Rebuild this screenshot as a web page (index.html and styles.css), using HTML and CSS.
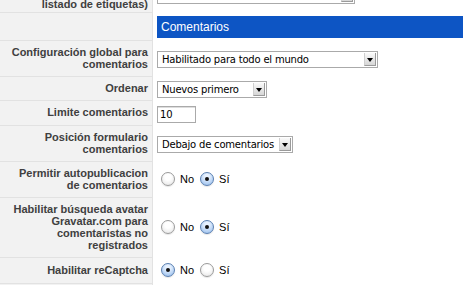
FILE: index.html
```html
<!DOCTYPE html>
<html>
<head>
<meta charset="utf-8">
<link rel="stylesheet" href="styles.css">
</head>
<body>
<table class="form">
  <tr>
    <td class="lbl first">Mostrar etiquetas (en el<br>listado de etiquetas)</td>
    <td class="val"><span class="select" style="width:196px"><span class="txt">Sí</span><span class="arrow"></span></span></td>
  </tr>
  <tr>
    <td class="lbl"></td>
    <td class="val"><div class="bar">Comentarios</div></td>
  </tr>
  <tr>
    <td class="lbl">Configuración global para<br>comentarios</td>
    <td class="val"><span class="select" style="width:219px"><span class="txt">Habilitado para todo el mundo</span><span class="arrow"></span></span></td>
  </tr>
  <tr>
    <td class="lbl">Ordenar</td>
    <td class="val"><span class="select" style="width:108px"><span class="txt">Nuevos primero</span><span class="arrow"></span></span></td>
  </tr>
  <tr>
    <td class="lbl">Limite comentarios</td>
    <td class="val"><span class="input">10</span></td>
  </tr>
  <tr>
    <td class="lbl">Posición formulario<br>comentarios</td>
    <td class="val"><span class="select" style="width:134px"><span class="txt">Debajo de comentarios</span><span class="arrow"></span></span></td>
  </tr>
  <tr>
    <td class="lbl">Permitir autopublicacion<br>de comentarios</td>
    <td class="val"><span class="radios"><span class="radio"></span><span class="rl">No</span><span class="radio on"></span><span class="rl">Sí</span></span></td>
  </tr>
  <tr>
    <td class="lbl">Habilitar búsqueda avatar<br>Gravatar.com para<br>comentaristas no<br>registrados</td>
    <td class="val"><span class="radios"><span class="radio"></span><span class="rl">No</span><span class="radio on"></span><span class="rl">Sí</span></span></td>
  </tr>
  <tr>
    <td class="lbl">Habilitar reCaptcha</td>
    <td class="val"><span class="radios"><span class="radio on"></span><span class="rl">No</span><span class="radio"></span><span class="rl">Sí</span></span></td>
  </tr>
  <tr>
    <td class="lbl">Clave pública reCaptcha</td>
    <td class="val"><span class="input wide"></span></td>
  </tr>
</table>
</body>
</html>
```
FILE: styles.css
```css
html, body {
  margin: 0;
  padding: 0;
  background: #fff;
  overflow: hidden;
}
.form {
  border-collapse: separate;
  border-spacing: 0;
  margin-top: -23px;
  width: 463px;
  font-family: "Liberation Sans", Arial, sans-serif;
}
.lbl {
  width: 140px;
  background: #f2f2f2;
  color: #404040;
  font-weight: bold;
  font-size: 11px;
  line-height: 12px;
  text-align: right;
  padding: 5px 4px 6px 8px;
  vertical-align: middle;
  border-right: 1px solid #e2e2e2;
  border-bottom: 1px solid #e2e2e2;
}
.lbl.first {
  padding-top: 9px;
  padding-bottom: 2px;
}
.val {
  padding: 3px 0 3px 4px;
  vertical-align: middle;
}
.bar {
  background: #0d55c4;
  color: #fff;
  font-size: 12px;
  height: 22px;
  line-height: 22px;
  padding-left: 4px;
}
.select {
  display: inline-flex;
  align-items: center;
  height: 15px;
  border: 1px solid #aaa;
  background: #fff;
  font-family: "DejaVu Sans", Verdana, sans-serif;
  font-size: 10px;
  letter-spacing: -0.2px;
  color: #000;
  vertical-align: middle;
}
.select .txt {
  flex: 1;
  padding-left: 4px;
  white-space: nowrap;
  overflow: hidden;
}
.select .arrow {
  width: 12px;
  height: 13px;
  margin: 1px;
  background: linear-gradient(#fafafa, #d6d6d6);
  border-left: 1px solid #cfcfcf;
  border-right: 1px solid #9a9a9a;
  border-bottom: 1px solid #9a9a9a;
  box-sizing: border-box;
  position: relative;
}
.select .arrow::after {
  content: "";
  position: absolute;
  left: 2px;
  top: 5px;
  border-left: 3px solid transparent;
  border-right: 3px solid transparent;
  border-top: 4px solid #000;
}
.input {
  display: inline-block;
  width: 35px;
  height: 15px;
  border: 1px solid #aaa;
  box-shadow: inset 0 1px 0 #ddd;
  font-family: "DejaVu Sans", Verdana, sans-serif;
  font-size: 10px;
  line-height: 15px;
  padding-left: 2px;
  vertical-align: middle;
}
.input.wide {
  width: 134px;
}
.radios {
  display: inline-flex;
  align-items: center;
  padding-left: 4px;
  padding-top: 2px;
  font-size: 11px;
}
.radio {
  width: 12px;
  height: 12px;
  border-radius: 50%;
  border: 1px solid #9a9a9a;
  background: radial-gradient(circle at 50% 35%, #fff 30%, #e2e2e2 100%);
  box-shadow: 0 1px 1px rgba(0,0,0,0.1);
  position: relative;
}
.radio.on {
  border-color: #5a7fb0;
  background: radial-gradient(circle at 50% 30%, #e8f2ff 20%, #8fb8ea 100%);
}
.radio.on::after {
  content: "";
  position: absolute;
  left: 4px;
  top: 4px;
  width: 4px;
  height: 4px;
  border-radius: 50%;
  background: #111;
}
.rl {
  margin: 0 6px 0 5px;
}
```
